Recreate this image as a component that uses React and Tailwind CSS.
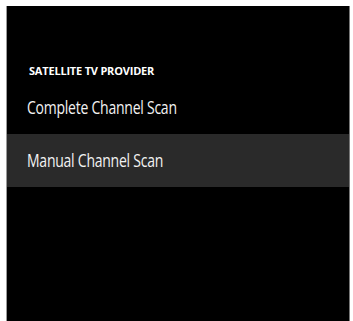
export default function App() {
  return (
    <div className="w-[353px] h-[321px] bg-white overflow-hidden pt-[6px] pl-[6px]">
      <div
        className="w-[344px] h-[320px] bg-black border-l border-[#9a9a9a] border-r border-r-[#777] flex flex-col"
        style={{ fontFamily: '"Open Sans", "Liberation Sans", sans-serif' }}
      >
        <div className="h-[75px] flex items-end pl-[22px] pb-[5px]">
          <span className="text-white text-[11px] font-bold tracking-[-0.2px] leading-none">
            SATELLITE TV PROVIDER
          </span>
        </div>
        <div className="h-[53px] flex items-center pl-[20px]">
          <span className="inline-block origin-left scale-x-[0.8] whitespace-nowrap text-[#f2f2f2] text-[17.5px] tracking-[-0.3px] leading-none">
            Complete Channel Scan
          </span>
        </div>
        <div className="h-[53px] flex items-center pl-[20px] bg-[#2a2a2a]">
          <span className="inline-block origin-left scale-x-[0.8] whitespace-nowrap text-[#f2f2f2] text-[17.5px] tracking-[-0.3px] leading-none">
            Manual Channel Scan
          </span>
        </div>
      </div>
    </div>
  );
}
